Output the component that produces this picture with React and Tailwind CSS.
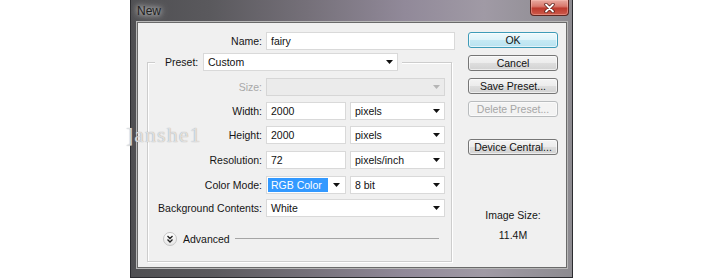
const Arrow = ({ color = "#111" }) => (
  <svg width="7" height="4" viewBox="0 0 7 4" className="shrink-0">
    <path d="M0 0h7L3.5 4z" fill={color} />
  </svg>
);

const fieldBase =
  "h-[18px] bg-white border border-[#d9d9d9] flex items-center text-[#111]";

function Select({ value, className = "" }) {
  return (
    <div className={`${fieldBase} pl-[4px] pr-[4px] justify-between ${className}`}>
      <span>{value}</span>
      <Arrow />
    </div>
  );
}

function Input({ value, className = "" }) {
  return <div className={`${fieldBase} pl-[4px] ${className}`}>{value}</div>;
}

function Row({ label, children, className = "", dim = false }) {
  return (
    <div className={`flex items-center gap-[4px] ${className}`}>
      <div className={`w-[114px] text-right ${dim ? "text-[#a8a8a8]" : ""}`}>{label}</div>
      {children}
    </div>
  );
}

function Btn({ children, primary = false, disabled = false, className = "" }) {
  const look = primary
    ? "border-[#3e9bb8] bg-[linear-gradient(180deg,#eef9fc_0%,#def3fa_50%,#c6e9f4_51%,#b9e2f0_100%)] text-[#111]"
    : disabled
    ? "border-[#b9bcbe] bg-[#f3f3f3] text-[#a6a6a6]"
    : "border-[#767676] bg-[linear-gradient(180deg,#f4f4f4_0%,#ececec_50%,#dedede_51%,#d2d2d2_100%)] text-[#111]";
  return (
    <div
      className={`h-[16px] w-[90px] rounded-[3px] border flex items-center justify-center shadow-[inset_0_0_0_1px_rgba(255,255,255,0.6)] ${look} ${className}`}
    >
      {children}
    </div>
  );
}

export default function App() {
  return (
    <div className="relative w-[705px] h-[278px] bg-white overflow-hidden [font-family:'Liberation_Sans',Arial,sans-serif] text-[10.5px] leading-[13px] text-[#151515]">
      <div className="ml-[130px] w-[443px] h-[278px] flex flex-col border-x border-b border-[#2c2c30] bg-[linear-gradient(90deg,#4f4f52_0%,#5a595d_18%,#757079_40%,#918999_62%,#a09aa5_80%,#8d8b90_100%)]">
        {/* Title bar */}
        <div className="h-[22px] flex items-start justify-between">
          <span className="ml-[6px] mt-[4px] text-[12px] leading-[14px] text-[#1e1e1e] [text-shadow:0_0_5px_#dcdcdc,0_0_8px_#cfcfcf]">
            New
          </span>
          <div className="mr-[3px] w-[39px] h-[16px] rounded-b-[4px] border border-t-0 border-[#5e2620] bg-[linear-gradient(180deg,#e9aaa0_0%,#d9796d_42%,#bd3a2d_55%,#cd5b4c_100%)] flex items-center justify-center shadow-[inset_0_0_0_1px_rgba(255,200,190,0.4)]">
            <svg width="11" height="10" viewBox="0 0 11 10">
              <path d="M2 1.5l7 7M9 1.5l-7 7" stroke="#5a1d16" strokeWidth="3.4" strokeLinecap="round" />
              <path d="M2 1.5l7 7M9 1.5l-7 7" stroke="#fff" strokeWidth="1.8" strokeLinecap="round" />
            </svg>
          </div>
        </div>

        {/* Client area */}
        <div className="ml-[6px] mr-[5px] h-[246px] bg-[#f0f0f0] border border-[#6a6a6a] flex shadow-[0_0_0_1px_#b8b8b8]">
          {/* Left column */}
          <div className="w-[318px] pt-[9px] flex flex-col">
            <div className="flex items-center gap-[4px]">
              <div className="w-[124px] text-right">Name:</div>
              <Input value="fairy" className="w-[189px]" />
            </div>

            {/* Group box */}
            <div className="mt-[12px] ml-[9px] w-[305px] h-[200px] border border-[#cdcdcd] shadow-[inset_1px_1px_0_#ffffff,1px_1px_0_#ffffff] flex flex-col">
              <div className="-mt-[10px] ml-[7px] self-start pl-[10px] pr-[4px] bg-[#f0f0f0] flex items-center gap-[2px]">
                <div className="w-[36px]">Preset:</div>
                <Select value="Custom" className="w-[195px]" />
              </div>

              <Row label="Size:" dim className="mt-[7px]">
                <div className="h-[18px] w-[179px] bg-[#ebebeb] border border-[#d6d6d6] flex items-center justify-end pr-[4px]">
                  <Arrow color="#b5b5b5" />
                </div>
              </Row>

              <Row label="Width:" className="mt-[6px]">
                <Input value="2000" className="w-[80px]" />
                <Select value="pixels" className="w-[95px]" />
              </Row>

              <Row label="Height:" className="mt-[6px]">
                <Input value="2000" className="w-[80px]" />
                <Select value="pixels" className="w-[95px]" />
              </Row>

              <Row label="Resolution:" className="mt-[7px]">
                <Input value="72" className="w-[80px]" />
                <Select value="pixels/inch" className="w-[95px]" />
              </Row>

              <Row label="Color Mode:" className="mt-[7px]">
                <div className={`${fieldBase} w-[80px] pl-[1px] pr-[5px] justify-between`}>
                  <span className="h-[14px] w-[60px] bg-[#3399ff] text-white pl-[3px] flex items-center">
                    RGB Color
                  </span>
                  <Arrow />
                </div>
                <Select value="8 bit" className="w-[95px]" />
              </Row>

              <Row label="Background Contents:" className="mt-[5px]">
                <Select value="White" className="w-[179px]" />
              </Row>

              <div className="mt-[15px] ml-[15px] mr-[12px] flex items-center">
                <div className="w-[14px] h-[14px] rounded-full border border-[#c4c4c4] bg-[linear-gradient(180deg,#ffffff_0%,#e6e6e6_100%)] flex items-center justify-center">
                  <svg width="8" height="8" viewBox="0 0 8 8">
                    <path d="M1.5 1l2.5 2.5L6.5 1M1.5 4.5L4 7l2.5-2.5" fill="none" stroke="#222" strokeWidth="1.3" />
                  </svg>
                </div>
                <span className="ml-[6px]">Advanced</span>
                <div className="ml-[5px] flex-1 h-[2px] border-t border-[#a5a5a5] border-b-white" />
              </div>
            </div>
          </div>

          {/* Right column */}
          <div className="ml-[12px] w-[90px] pt-[9px] flex flex-col items-center">
            <Btn primary>OK</Btn>
            <Btn className="mt-[7px]">Cancel</Btn>
            <Btn className="mt-[7px]">Save Preset...</Btn>
            <Btn disabled className="mt-[7px]">Delete Preset...</Btn>
            <Btn className="mt-[22px]">Device Central...</Btn>
            <div className="mt-[54px]">Image Size:</div>
            <div className="mt-[7px]">11.4M</div>
          </div>
        </div>
      </div>

      {/* watermark */}
      <div className="absolute left-[126px] top-[124px] [font-family:'Liberation_Serif',serif] text-[22px] leading-[22px] tracking-[1px] text-white/70 [text-shadow:0_0_1px_#8a8a8a] pointer-events-none">
        ]anshe1
      </div>
    </div>
  );
}
